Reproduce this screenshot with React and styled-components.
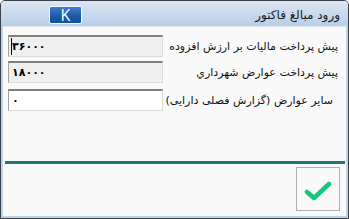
import styled, { createGlobalStyle } from "styled-components";

const Global = createGlobalStyle`
  html, body {
    margin: 0;
    padding: 0;
    background: #ffffff;
  }
  * {
    box-sizing: border-box;
  }
`;

const fields = [
  { label: "پیش پرداخت مالیات بر ارزش افزوده", value: "۳۶۰۰۰", readOnly: true, caret: true },
  { label: "پیش پرداخت عوارض شهرداري", value: "۱۸۰۰۰", readOnly: true },
  { label: "سایر عوارض (گزارش فصلی دارایی)", value: "۰", readOnly: false, labelInset: 5 },
];

export default function App() {
  return (
    <>
      <Global />
      <Window>
        <TitleBar>
          <KButton>K</KButton>
          <Title>ورود مبالغ فاکتور</Title>
        </TitleBar>
        <Body>
          <Form>
            {fields.map((f, i) => (
              <Row key={i} $extra={i === 2}>
                <Field $readOnly={f.readOnly}>
                  {f.caret && <Caret />}
                  {f.value}
                </Field>
                <Label $inset={f.labelInset || 0}>{f.label}</Label>
              </Row>
            ))}
          </Form>
          <Divider />
          <Footer>
            <OkButton>
              <svg width="28" height="20" viewBox="0 0 28 20">
                <path
                  d="M3 11 L10 17 L25 3"
                  fill="none"
                  stroke="#14c67e"
                  strokeWidth="4.5"
                  strokeLinecap="round"
                  strokeLinejoin="round"
                />
              </svg>
            </OkButton>
          </Footer>
        </Body>
      </Window>
    </>
  );
}

const Window = styled.div`
  width: 349px;
  height: 219px;
  display: flex;
  flex-direction: column;
  border: 1px solid #3a3f45;
  border-radius: 5px 5px 0 0;
  overflow: hidden;
  background: #bcd3ec;
  font-family: "DejaVu Sans", "Noto Sans", sans-serif;
`;

const TitleBar = styled.div`
  height: 25px;
  flex: none;
  display: flex;
  align-items: center;
  justify-content: space-between;
  padding: 0 8px 0 48px;
  background: linear-gradient(#dbe6f3, #b7cee8);
`;

const KButton = styled.div`
  width: 33px;
  height: 18px;
  margin-top: 2px;
  border: 1px solid #f4f8fc;
  border-radius: 2px;
  background: linear-gradient(#3c7fd0, #1d5aa8 55%, #174f98);
  color: #ffffff;
  font-family: "Open Sans", "DejaVu Sans", sans-serif;
  font-size: 16px;
  line-height: 16px;
  text-align: center;
`;

const Title = styled.div`
  direction: rtl;
  font-size: 12px;
  color: #1a1a1a;
  margin-top: 2px;
`;

const Body = styled.div`
  flex: 1;
  display: flex;
  flex-direction: column;
  margin: 0 2px 2px 2px;
  background: #f9f9f9;
  border-top: 1px solid #dfe7f0;
`;

const Form = styled.div`
  display: flex;
  flex-direction: column;
  padding: 8px 0 0 5px;
  gap: 4px;
  height: 133px;
`;

const Row = styled.div`
  display: flex;
  align-items: center;
  margin-top: ${(p) => (p.$extra ? 2 : 0)}px;
`;

const Field = styled.div`
  position: relative;
  width: 155px;
  height: 22px;
  flex: none;
  display: flex;
  align-items: center;
  padding-left: 3px;
  border-top: 2px solid #7f7f7f;
  border-left: 1px solid #a0a0a0;
  border-right: 1px solid #dcdcdc;
  border-bottom: 1px solid #dcdcdc;
  background: ${(p) => (p.$readOnly ? "#efefef" : "#ffffff")};
  font-size: 11px;
  font-weight: bold;
  color: #000;
`;

const Caret = styled.span`
  position: absolute;
  left: 2px;
  top: 1px;
  width: 1px;
  height: 17px;
  background: #000;
`;

const Label = styled.div`
  flex: 1;
  direction: rtl;
  text-align: right;
  padding-right: ${(p) => 8 + p.$inset}px;
  font-size: 11px;
  color: #111;
`;

const Divider = styled.div`
  height: 3px;
  margin: 1px 1px 0 2px;
  background: #1b7878;
`;

const Footer = styled.div`
  flex: 1;
  display: flex;
  justify-content: flex-end;
  align-items: flex-start;
  padding: 3px 6px 0 0;
`;

const OkButton = styled.div`
  width: 44px;
  height: 44px;
  border: 1px solid #b0b0b0;
  display: flex;
  align-items: center;
  justify-content: center;
  padding-top: 3px;
  background: #f9f9f9;
`;
